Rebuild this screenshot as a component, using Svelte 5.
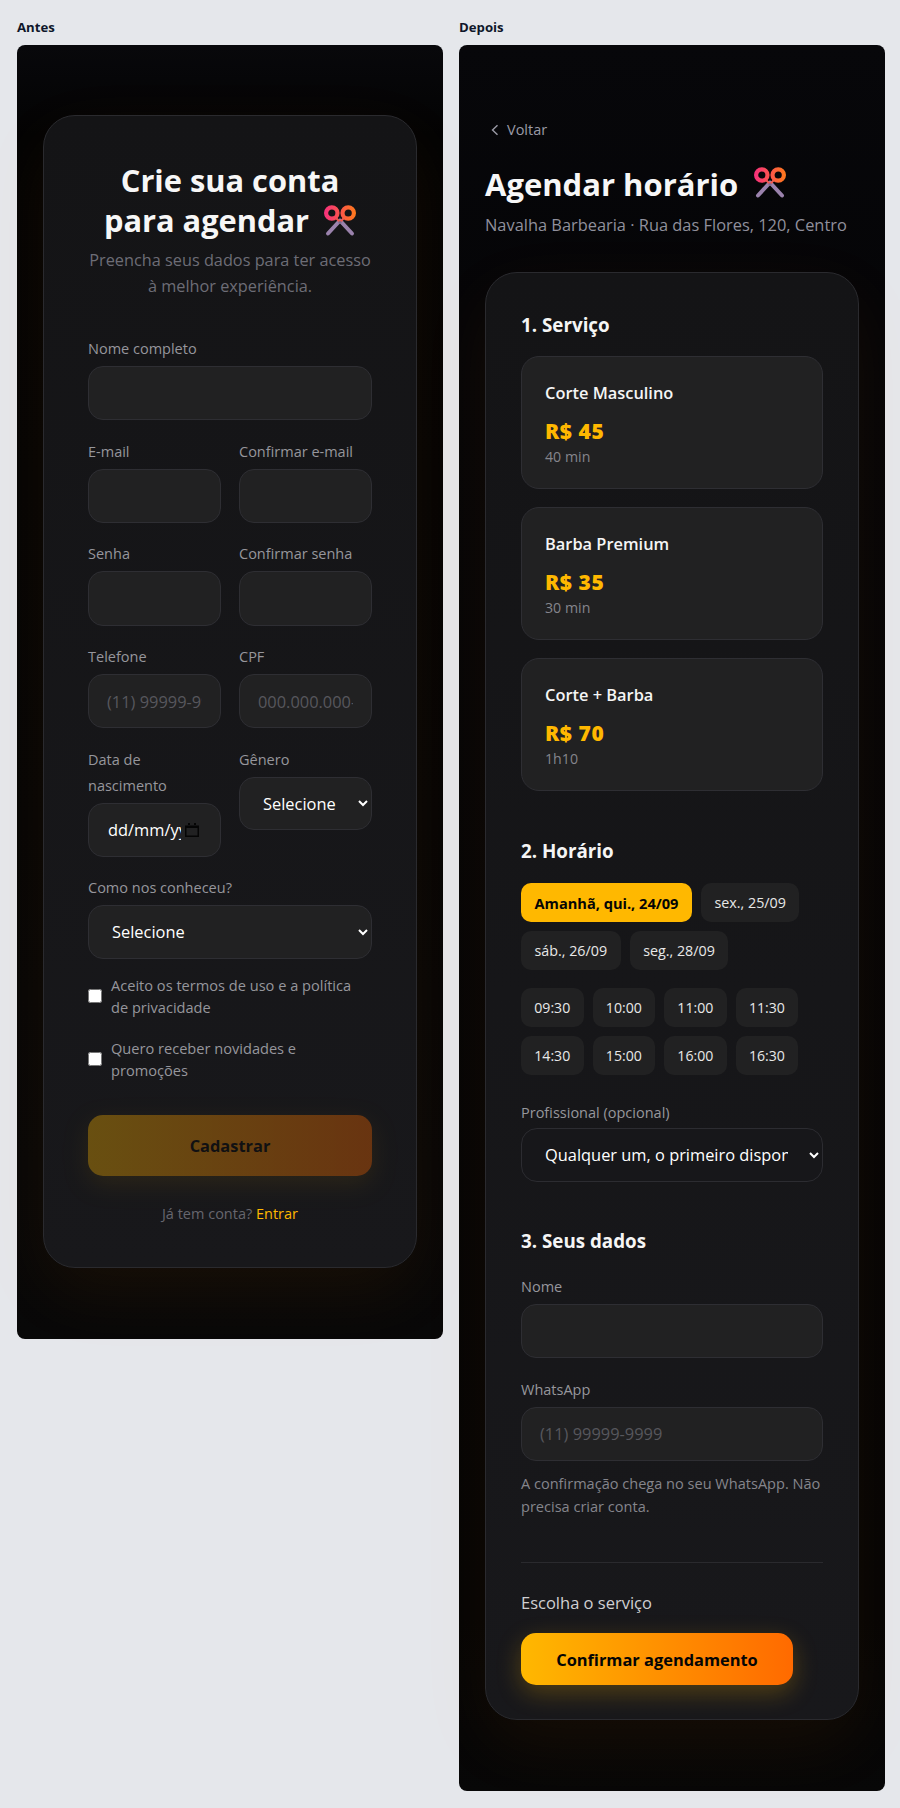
<script>
  const days = ['sex., 25/09', 'sáb., 26/09', 'seg., 28/09'];
  const times = ['09:30', '10:00', '11:00', '11:30', '14:30', '15:00', '16:00', '16:30'];
  const services = [
    { name: 'Corte Masculino', price: 'R$ 45', time: '40 min' },
    { name: 'Barba Premium', price: 'R$ 35', time: '30 min' },
    { name: 'Corte + Barba', price: 'R$ 70', time: '1h10' }
  ];
</script>

{#snippet scissors()}
  <svg class="scissors" viewBox="0 0 32 32" aria-hidden="true">
    <defs>
      <linearGradient id="ring" gradientUnits="userSpaceOnUse" x1="0" y1="0" x2="32" y2="0">
        <stop offset="0" stop-color="#f72f7e" />
        <stop offset="1" stop-color="#ff7a1a" />
      </linearGradient>
    </defs>
    <path d="M4 28.5 16 15.5M28 28.5 16 15.5" stroke="#9a82ac" stroke-width="4" stroke-linecap="round" fill="none" />
    <path d="M12.5 13.5 16 17 19.5 13.5" stroke="#ef5a50" stroke-width="2.2" fill="none" />
    <circle cx="7.8" cy="8" r="5.7" fill="none" stroke="url(#ring)" stroke-width="4.2" />
    <circle cx="24.2" cy="8" r="5.7" fill="none" stroke="url(#ring)" stroke-width="4.2" />
    <circle cx="16" cy="17.5" r="1.6" fill="#7f6b90" />
  </svg>
{/snippet}

<div class="page">
  <section class="col">
    <h2>Antes</h2>
    <div class="panel">
      <div class="card before">
        <h1>Crie sua conta<br />para agendar {@render scissors()}</h1>
        <p class="sub">Preencha seus dados para ter acesso à melhor experiência.</p>
        <form class="form">
          <div class="field"><label for="n">Nome completo</label><input id="n" /></div>
          <div class="row">
            <div class="field"><label for="e">E-mail</label><input id="e" /></div>
            <div class="field"><label for="e2">Confirmar e-mail</label><input id="e2" /></div>
          </div>
          <div class="row">
            <div class="field"><label for="s">Senha</label><input id="s" /></div>
            <div class="field"><label for="s2">Confirmar senha</label><input id="s2" /></div>
          </div>
          <div class="row">
            <div class="field"><label for="t">Telefone</label><input id="t" placeholder="(11) 99999-9999" /></div>
            <div class="field"><label for="c">CPF</label><input id="c" placeholder="000.000.000-00" /></div>
          </div>
          <div class="row">
            <div class="field">
              <label for="d">Data de nascimento</label>
              <div class="date" id="d">
                <span class="date-text">dd/mm/yyyy</span>
                <svg class="cal" viewBox="0 0 14 14" aria-hidden="true">
                  <path d="M0 2.5h14V14H0zM1.5 5v7.5h11V5zM3 0h2v3H3zM9 0h2v3H9z" fill="#050505" fill-rule="evenodd" />
                </svg>
              </div>
            </div>
            <div class="field">
              <label for="g">Gênero</label>
              <select id="g"><option>Selecione</option></select>
            </div>
          </div>
          <div class="field">
            <label for="o">Como nos conheceu?</label>
            <select id="o"><option>Selecione</option></select>
          </div>
          <label class="check first"><input type="checkbox" /><span>Aceito os termos de uso e a política de privacidade</span></label>
          <label class="check"><input type="checkbox" /><span>Quero receber novidades e promoções</span></label>
          <button type="button" class="cta off">Cadastrar</button>
        </form>
        <p class="foot">Já tem conta? <a href="#entrar">Entrar</a></p>
      </div>
    </div>
  </section>

  <section class="col">
    <h2>Depois</h2>
    <div class="panel after">
      <a class="back" href="#voltar">
        <svg viewBox="0 0 16 16" aria-hidden="true"><path d="M9.5 3.2 4.5 8l5 4.8" fill="none" stroke="currentColor" stroke-width="1.4" /></svg>
        Voltar
      </a>
      <h1 class="title">Agendar horário {@render scissors()}</h1>
      <p class="place">Navalha Barbearia · Rua das Flores, 120, Centro</p>

      <div class="card booking">
        <h3>1. Serviço</h3>
        <div class="services">
          {#each services as s}
            <div class="service">
              <div class="s-name">{s.name}</div>
              <div class="s-price">{s.price}</div>
              <div class="s-time">{s.time}</div>
            </div>
          {/each}
        </div>

        <h3 class="next">2. Horário</h3>
        <div class="chips">
          <button type="button" class="chip on">Amanhã, qui., 24/09</button>
          {#each days as d}
            <button type="button" class="chip">{d}</button>
          {/each}
        </div>
        <div class="chips times">
          {#each times as t}
            <button type="button" class="chip">{t}</button>
          {/each}
        </div>
        <div class="field pro">
          <label for="p">Profissional (opcional)</label>
          <select id="p" class="ghost"><option>Qualquer um, o primeiro disponível</option></select>
        </div>

        <h3 class="next last">3. Seus dados</h3>
        <div class="field nome"><label for="nm">Nome</label><input id="nm" /></div>
        <div class="field whats"><label for="w">WhatsApp</label><input id="w" placeholder="(11) 99999-9999" /></div>
        <p class="hint">A confirmação chega no seu WhatsApp. Não precisa criar conta.</p>
        <div class="rule"></div>
        <p class="summary">Escolha o serviço</p>
        <button type="button" class="cta confirm">Confirmar agendamento</button>
      </div>
    </div>
  </section>
</div>

<style>
  :global(body) {
    margin: 0;
    background: #e5e7eb;
    font-family: "Open Sans", "Noto Sans", sans-serif;
  }

  .page {
    display: flex;
    align-items: flex-start;
    gap: 16px;
    padding: 16px 15px 17px 17px;
  }

  .col {
    width: 426px;
    flex: none;
  }

  h2 {
    margin: 0 0 7px;
    font-size: 13.2px;
    line-height: 22px;
    font-weight: 700;
    color: #0f172a;
  }

  .panel {
    box-sizing: border-box;
    padding: 70px 26px 71px;
    border-radius: 8px;
    background: linear-gradient(180deg, #08080b 0, #030303 90px, #050505 60%, #080808 100%);
  }

  .panel.after {
    padding-top: 72px;
    background: linear-gradient(180deg, #07070a 0, #050507 260px, #040404 90%, #070707 100%);
  }

  .card {
    box-sizing: border-box;
    border: 1px solid #2a2a2e;
    border-radius: 32px;
    background: linear-gradient(180deg, #141416, #18181b);
    box-shadow: 0 24px 70px rgba(255, 130, 0, 0.07);
  }

  .before {
    padding: 45px 44px 40px;
    text-align: center;
  }

  .booking {
    padding: 35px 35px 34px;
    text-align: left;
  }

  h1 {
    margin: 0;
    font-size: 30.8px;
    line-height: 39.5px;
    font-weight: 700;
    color: #f7f7f7;
  }

  .scissors {
    display: inline-block;
    width: 32px;
    height: 32px;
    vertical-align: -5.5px;
    margin-left: 7px;
  }

  .sub {
    margin: 7px 0 0;
    font-size: 16.3px;
    line-height: 26.4px;
    color: #6d6d76;
  }

  .form {
    margin-top: 36px;
    display: flex;
    flex-direction: column;
    gap: 18.3px;
    text-align: left;
  }

  .row {
    display: grid;
    grid-template-columns: 1fr 1fr;
    gap: 18px;
    align-items: start;
  }

  .field {
    min-width: 0;
  }

  label {
    display: block;
    font-size: 14.5px;
    line-height: 26px;
    color: #96969c;
  }

  input:not([type="checkbox"]),
  select,
  .date {
    display: block;
    box-sizing: border-box;
    width: 100%;
    height: 54.4px;
    margin-top: 4px;
    padding: 0 18px;
    border: 1px solid #2e2e33;
    border-radius: 15px;
    background: #212122;
    color: #fff;
    font-family: inherit;
    font-size: 16.4px;
    outline: none;
  }

  select {
    height: 53.4px;
    padding-left: 19px;
  }

  input::placeholder {
    color: #57575d;
    opacity: 1;
  }

  .date {
    display: flex;
    align-items: center;
    padding: 0 21px 0 19px;
    gap: 4px;
  }

  .date-text {
    flex: 1;
    min-width: 0;
    overflow: hidden;
    white-space: nowrap;
  }

  .cal {
    width: 14px;
    height: 14px;
    flex: none;
  }

  .check {
    display: flex;
    align-items: center;
    gap: 9px;
    padding-right: 12px;
    font-size: 14.6px;
    line-height: 22px;
  }

  .check.first {
    margin-top: -2.5px;
  }

  .check input {
    flex: none;
    width: 14px;
    height: 14px;
    margin: 0;
  }

  .cta {
    display: block;
    border: 0;
    border-radius: 15px;
    background: linear-gradient(90deg, #ffb800, #ff6a00);
    color: #050505;
    font-family: inherit;
    font-weight: 700;
    font-size: 16.4px;
    box-shadow: 0 8px 24px rgba(255, 184, 0, 0.25);
  }

  .off {
    width: 100%;
    height: 61px;
    margin-top: 16px;
    opacity: 0.35;
  }

  .foot {
    margin: 25px 0 0;
    font-size: 14.5px;
    line-height: 26px;
    color: #66666e;
  }

  .foot a {
    color: #ffb800;
    text-decoration: none;
  }

  .back {
    display: inline-flex;
    align-items: center;
    gap: 3px;
    padding-left: 3px;
    font-size: 14.5px;
    line-height: 26px;
    color: #9a9aa6;
    text-decoration: none;
  }

  .back svg {
    width: 16px;
    height: 16px;
  }

  .title {
    margin-top: 18.5px;
    font-size: 31px;
    line-height: 44px;
  }

  .title .scissors {
    vertical-align: -3px;
    margin-left: 8px;
  }

  .place {
    margin: 6.5px 0 34px;
    font-size: 16.4px;
    line-height: 26px;
    color: #90909c;
  }

  h3 {
    margin: 0;
    font-size: 18.8px;
    line-height: 34px;
    font-weight: 700;
    color: #f5f5f5;
  }

  .next {
    margin-top: 43px;
  }

  .next.last {
    margin-top: 42.4px;
  }

  .services {
    display: flex;
    flex-direction: column;
    gap: 18px;
    margin-top: 14px;
  }

  .service {
    box-sizing: border-box;
    height: 133px;
    padding: 23px;
    border: 1px solid #2e2e33;
    border-radius: 18px;
    background: #212122;
  }

  .s-name {
    font-size: 16.4px;
    line-height: 26px;
    font-weight: 600;
    color: #f5f5f5;
  }

  .s-price {
    margin-top: 9.5px;
    font-size: 21px;
    line-height: 30.5px;
    font-weight: 800;
    letter-spacing: 0.6px;
    color: #ffb800;
  }

  .s-time {
    font-size: 14.2px;
    line-height: 22px;
    color: #85858c;
  }

  .chips {
    display: flex;
    flex-wrap: wrap;
    gap: 9px;
    margin-top: 15px;
  }

  .times {
    margin-top: 18px;
  }

  .chip {
    height: 39px;
    padding: 0 13.5px;
    border: 0;
    border-radius: 10px;
    background: #212122;
    color: #e8e8e8;
    font-family: inherit;
    font-size: 14.3px;
    white-space: nowrap;
  }

  .times .chip {
    padding: 0 13.3px;
    font-size: 14.1px;
  }

  .on {
    background: #ffb800;
    color: #050505;
    font-size: 14.6px;
    font-weight: 700;
  }

  .pro {
    margin-top: 24.7px;
  }

  .pro select {
    margin-top: 2.5px;
  }

  select.ghost {
    background: #17171a;
    border-color: #2c2c31;
    border-radius: 16px;
  }

  .nome {
    margin-top: 16px;
  }

  .whats {
    margin-top: 18.4px;
  }

  .hint {
    margin: 11px 0 0;
    font-size: 14.55px;
    line-height: 23px;
    color: #85858c;
  }

  .rule {
    height: 1px;
    margin-top: 43.7px;
    background: #2a2a2e;
  }

  .summary {
    margin: 26.5px 0 0;
    font-size: 16.5px;
    line-height: 28px;
    color: #d0d0d2;
  }

  .confirm {
    width: 272px;
    height: 52px;
    margin-top: 16px;
  }
</style>
